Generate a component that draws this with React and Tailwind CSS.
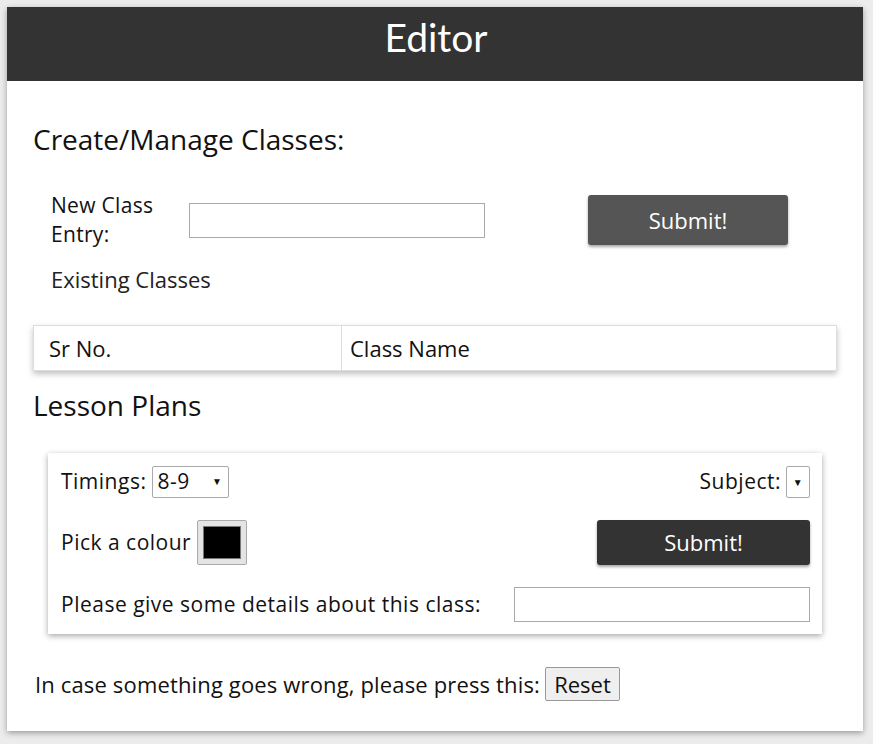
import React from "react";

export default function App() {
  const gs = { fontFamily: "'Open Sans', sans-serif" };
  const sg = { fontFamily: "'Open Sans', sans-serif" };
  return (
    <div className="min-h-[744px] w-[873px] bg-[#ececec] pt-[7px] pl-[7px]">
      <div className="w-[856px] h-[724px] bg-white shadow-[0_2px_6px_rgba(0,0,0,0.35)]">
        <div className="h-[74px] bg-[#333333] flex justify-center">
          <h1 className="text-white text-[39px] leading-[46px] mt-[7px] pl-[2px]" style={{ fontFamily: "Lato, sans-serif" }}>Editor</h1>
        </div>
        <div className="px-[26px]">
          <h2 className="mt-[40px] text-[28px] leading-[36px] text-[#111]" style={sg}>
            Create/Manage Classes:
          </h2>
          <div className="mt-[34px] flex items-center pl-[18px]">
            <div className="w-[138px] text-[21px] leading-[29px] text-[#111] tracking-[0.3px]" style={gs}>New Class<br />Entry:</div>
            <input className="w-[296px] h-[35px] border border-[#aaaaaa] outline-none" />
            <div className="ml-[103px] w-[200px] h-[50px] rounded-[3px] bg-[#555555] text-white text-[22px] flex items-center justify-center shadow-[0_2px_3px_rgba(0,0,0,0.35)]" style={gs}>
              Submit!
            </div>
          </div>
          <div className="mt-[16px] pl-[18px] text-[22px] leading-[28px] text-[#222]" style={sg}>
            Existing Classes
          </div>
          <div className="mt-[32px] w-[804px] h-[46px] border border-[#ddd] flex shadow-[0_3px_6px_rgba(0,0,0,0.25)] text-[22px] text-[#111]" style={sg}>
            <div className="w-[308px] border-r border-[#ddd] flex items-center pl-[15px]">Sr No.</div>
            <div className="flex-1 flex items-center pl-[8px]">Class Name</div>
          </div>
          <h2 className="mt-[16px] text-[28px] leading-[36px] text-[#111]" style={sg}>
            Lesson Plans
          </h2>
          <div className="mt-[30px] ml-[15px] w-[774px] h-[181px] bg-white shadow-[0_2px_6px_rgba(0,0,0,0.35)] pl-[13px] pr-[12px] pt-[13px] text-[21px] text-[#111] tracking-[0.5px]" style={gs}>
            <div className="flex items-center justify-between h-[32px]">
              <div className="flex items-center">
                <span>Timings:</span>
                <div className="ml-[6px] w-[77px] h-[32px] border border-[#aaa] rounded-[2px] flex items-center pl-[4px] relative">
                  <span>8-9</span>
                  <span className="absolute right-[6px] top-[7px] text-[10px]">▼</span>
                </div>
              </div>
              <div className="flex items-center">
                <span>Subject:</span>
                <div className="ml-[5px] w-[24px] h-[32px] border border-[#aaa] rounded-[2px] flex items-center justify-center text-[10px]">▼</div>
              </div>
            </div>
            <div className="flex items-center justify-between mt-[22px]">
              <div className="flex items-center">
                <span>Pick a colour</span>
                <div className="ml-[6px] w-[50px] h-[45px] border border-[#aaa] bg-[#e4e4e4] p-[5px] rounded-[2px]">
                  <div className="w-full h-full bg-black border border-[#777]"></div>
                </div>
              </div>
              <div className="w-[213px] h-[45px] rounded-[3px] bg-[#333333] text-white text-[22px] tracking-normal flex items-center justify-center shadow-[0_2px_3px_rgba(0,0,0,0.35)]">
                Submit!
              </div>
            </div>
            <div className="flex items-center justify-between mt-[22px]">
              <span>Please give some details about this class:</span>
              <input className="w-[296px] h-[35px] border border-[#aaaaaa] outline-none" />
            </div>
          </div>
          <div className="mt-[33px] ml-[2px] flex items-center text-[22px] text-[#111] tracking-[0.15px]" style={sg}>
            <span>In case something goes wrong, please press this:</span>
            <div className="ml-[5px] w-[75px] h-[34px] border border-[#999] rounded-[2px] bg-[#efefef] flex items-center justify-center tracking-normal">Reset</div>
          </div>
        </div>
      </div>
    </div>
  );
}
